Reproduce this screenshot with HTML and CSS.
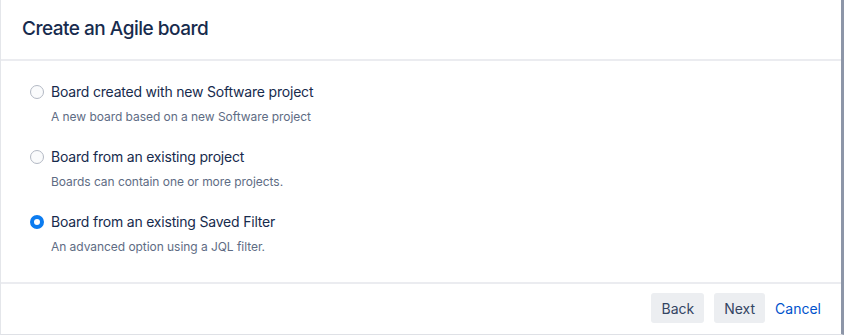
FILE: index.html
```html
<!DOCTYPE html>
<html lang="en">
<head>
    <meta charset="UTF-8">
    <title>Create an Agile board</title>
    <link rel="stylesheet" href="styles.css">
</head>
<body>

    <div class="dialog">
        <header class="dialog-header">
            <h2>Create an Agile board</h2>
        </header>

        <div class="dialog-body">
            <label class="option">
                <input type="radio" name="board" value="new">
                <span class="radio"></span>
                <span class="option-text">
                    <span class="option-title">Board created with new Software project</span>
                    <span class="option-desc">A new board based on a new Software project</span>
                </span>
            </label>
            <label class="option">
                <input type="radio" name="board" value="project">
                <span class="radio"></span>
                <span class="option-text">
                    <span class="option-title">Board from an existing project</span>
                    <span class="option-desc">Boards can contain one or more projects.</span>
                </span>
            </label>
            <label class="option">
                <input type="radio" name="board" value="filter" checked>
                <span class="radio"></span>
                <span class="option-text">
                    <span class="option-title">Board from an existing Saved Filter</span>
                    <span class="option-desc">An advanced option using a JQL filter.</span>
                </span>
            </label>
        </div>

        <footer class="dialog-footer">
            <button class="button">Back</button>
            <button class="button">Next</button>
            <a href="#" class="cancel">Cancel</a>
        </footer>
    </div>

</body>
</html>
```

FILE: styles.css
```css
* {
    margin: 0;
    padding: 0;
    box-sizing: border-box;
}

body {
    font-family: Inter, Roboto, sans-serif;
    background-color: #ffffff;
    color: #172b4d;
    width: 844px;
    height: 336px;
    overflow: hidden;
}

.dialog {
    width: 844px;
    height: 335px;
    border-left: 1px solid #e4e6ea;
    border-right: 3px solid #8d96a8;
    border-bottom: 1px solid #dfe1e6;
    display: flex;
    flex-direction: column;
}

.dialog-header {
    height: 61px;
    padding: 17px 21px 0;
    border-bottom: 2px solid #ebecf0;
}

.dialog-header h2 {
    font-size: 19px;
    font-weight: 500;
    line-height: 24px;
    letter-spacing: -0.5px;
    color: #172b4d;
}

.dialog-body {
    flex: 1;
    padding: 17px 29px 0;
    display: flex;
    flex-direction: column;
    gap: 17px;
}

.option {
    display: flex;
    align-items: flex-start;
    gap: 7px;
    cursor: pointer;
}

.option input {
    display: none;
}

.radio {
    width: 14px;
    height: 14px;
    margin-top: 7px;
    border: 1px solid #b3b9c4;
    border-radius: 50%;
    background: #fafbfc;
    flex-shrink: 0;
}

.option input:checked + .radio {
    border: 4px solid #0c7cf0;
    background: #ffffff;
}

.option-text {
    display: flex;
    flex-direction: column;
}

.option-title {
    font-size: 14px;
    line-height: 28px;
    letter-spacing: -0.2px;
    color: #172b4d;
}

.option-desc {
    margin-top: 2px;
    font-size: 12px;
    line-height: 18px;
    letter-spacing: -0.05px;
    color: #5e6c84;
}

.dialog-footer {
    height: 52px;
    border-top: 2px solid #ebecf0;
    display: flex;
    align-items: center;
    justify-content: flex-end;
    padding: 0 20px 2px 0;
    gap: 10px;
}

.button {
    font-family: inherit;
    font-size: 14px;
    color: #344563;
    background-color: #eceef1;
    border: none;
    border-radius: 3px;
    height: 30px;
    padding: 0 10px;
    cursor: pointer;
}

.button:hover {
    background-color: #dfe1e6;
}

.cancel {
    font-size: 14px;
    color: #0052cc;
    text-decoration: none;
}

.cancel:hover {
    text-decoration: underline;
}
```
